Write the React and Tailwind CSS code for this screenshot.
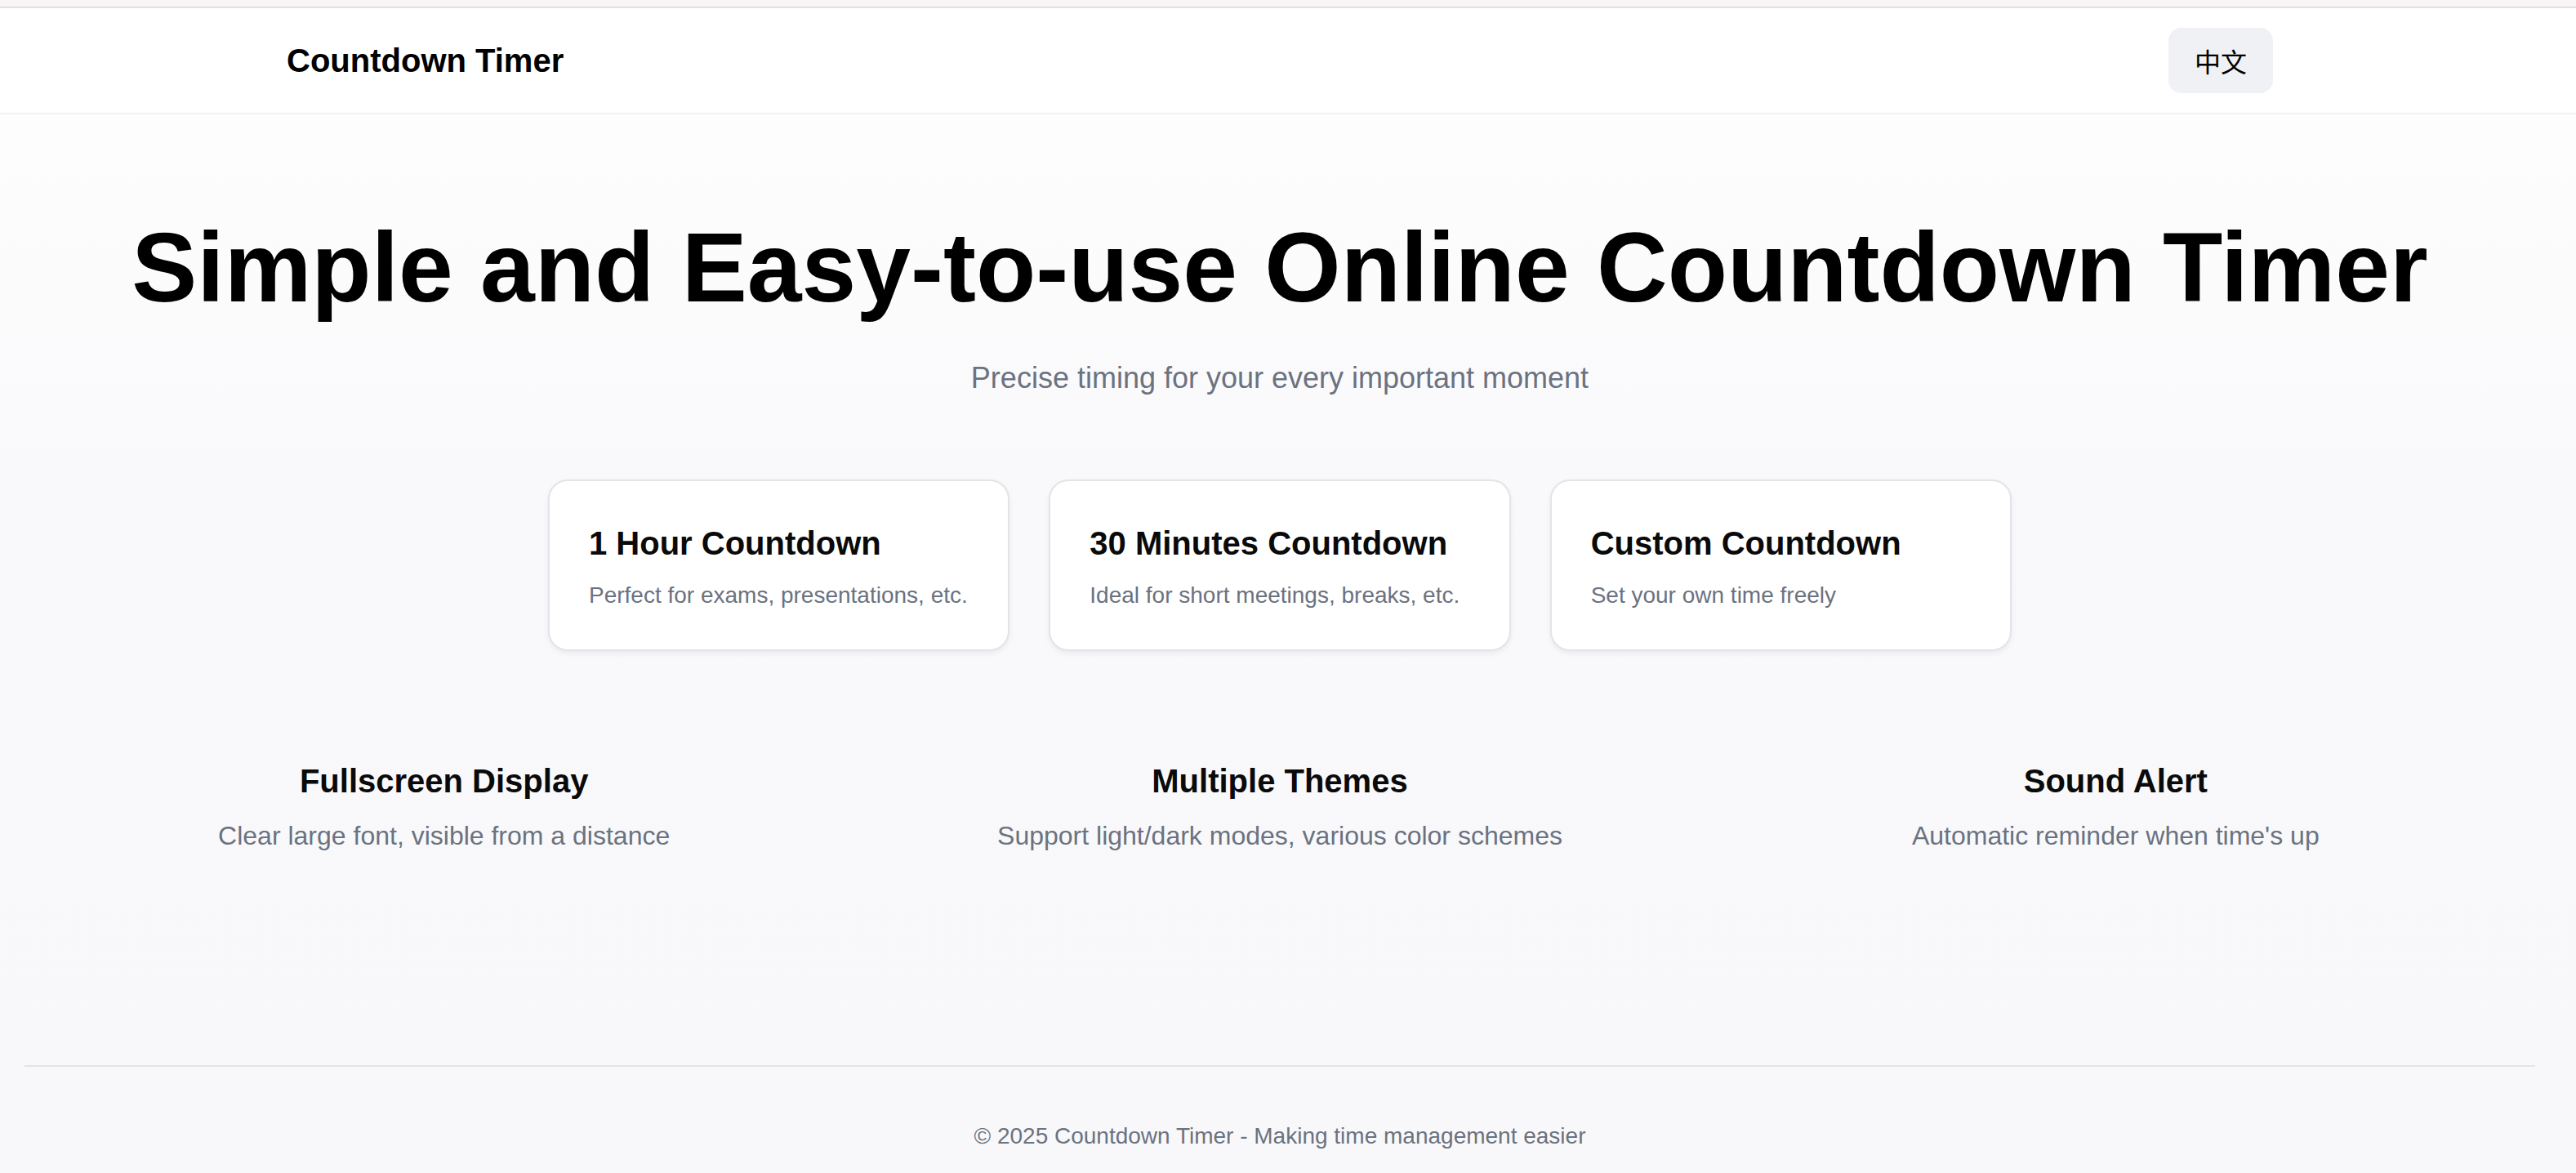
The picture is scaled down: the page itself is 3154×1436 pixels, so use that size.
const presets = [
  { title: "1 Hour Countdown", desc: "Perfect for exams, presentations, etc." },
  { title: "30 Minutes Countdown", desc: "Ideal for short meetings, breaks, etc." },
  { title: "Custom Countdown", desc: "Set your own time freely" },
];

const features = [
  { title: "Fullscreen Display", desc: "Clear large font, visible from a distance" },
  { title: "Multiple Themes", desc: "Support light/dark modes, various color schemes" },
  { title: "Sound Alert", desc: "Automatic reminder when time's up" },
];

export default function App() {
  return (
    <div className="h-screen overflow-hidden bg-linear-to-b from-white via-[#f9f9fb] via-40% to-[#f8f8fa] font-['Liberation_Sans','Noto_Sans_CJK_SC',sans-serif] text-[#0a0a0a]">
      <div className="h-2 bg-[#f8f5f4]" />

      <header className="bg-white border-t-2 border-[#e3dfe2] border-b-2 border-b-[#f1f1f3]">
        <div className="w-[3134px]">
          <div className="max-w-[2560px] mx-auto px-16 h-[128px] flex items-center justify-between">
            <h1 className="text-[40px] leading-[56px] font-bold text-black">Countdown Timer</h1>
            <button className="px-8 py-4 text-[32px] leading-[48px] rounded-[16px] bg-[#f0f1f4] text-black font-['Noto_Sans_CJK_SC',sans-serif]">
              中文
            </button>
          </div>
        </div>
      </header>

      <main className="w-[3134px]">
        <section className="pt-[127px] text-center">
          <h2 className="text-[120px] leading-none font-bold text-black">
            Simple and Easy-to-use Online Countdown Timer
          </h2>
          <p className="mt-[48px] text-[36px] leading-[56px] text-[#6b7280]">
            Precise timing for your every important moment
          </p>

          <div className="w-[1792px] mx-auto mt-[96px] grid grid-cols-3 gap-12 text-left">
            {presets.map((p) => (
              <div
                key={p.title}
                className="bg-white border-2 border-[#e4e4e8] rounded-[24px] px-[48px] pt-[48px] pb-[46px] shadow-[0_3px_6px_rgba(0,0,0,0.06)]"
              >
                <h3 className="text-[40px] leading-[56px] font-bold">{p.title}</h3>
                <p className="mt-[16px] text-[28px] leading-[40px] text-[#6b7280]">{p.desc}</p>
              </div>
            ))}
          </div>
        </section>

        <section className="mt-[131px] px-8 grid grid-cols-3 text-center">
          {features.map((f) => (
            <div key={f.title}>
              <h3 className="text-[40px] leading-[56px] font-bold">{f.title}</h3>
              <p className="mt-[15px] text-[32px] leading-[48px] text-[#6b7280]">{f.desc}</p>
            </div>
          ))}
        </section>

        <footer className="mt-[257px] mx-[30px] border-t-2 border-[#e3e3e8] pt-[65px] pb-8 text-center">
          <p className="text-[28px] leading-[40px] text-[#6b7280]">
            © 2025 Countdown Timer - Making time management easier
          </p>
        </footer>
      </main>
    </div>
  );
}
